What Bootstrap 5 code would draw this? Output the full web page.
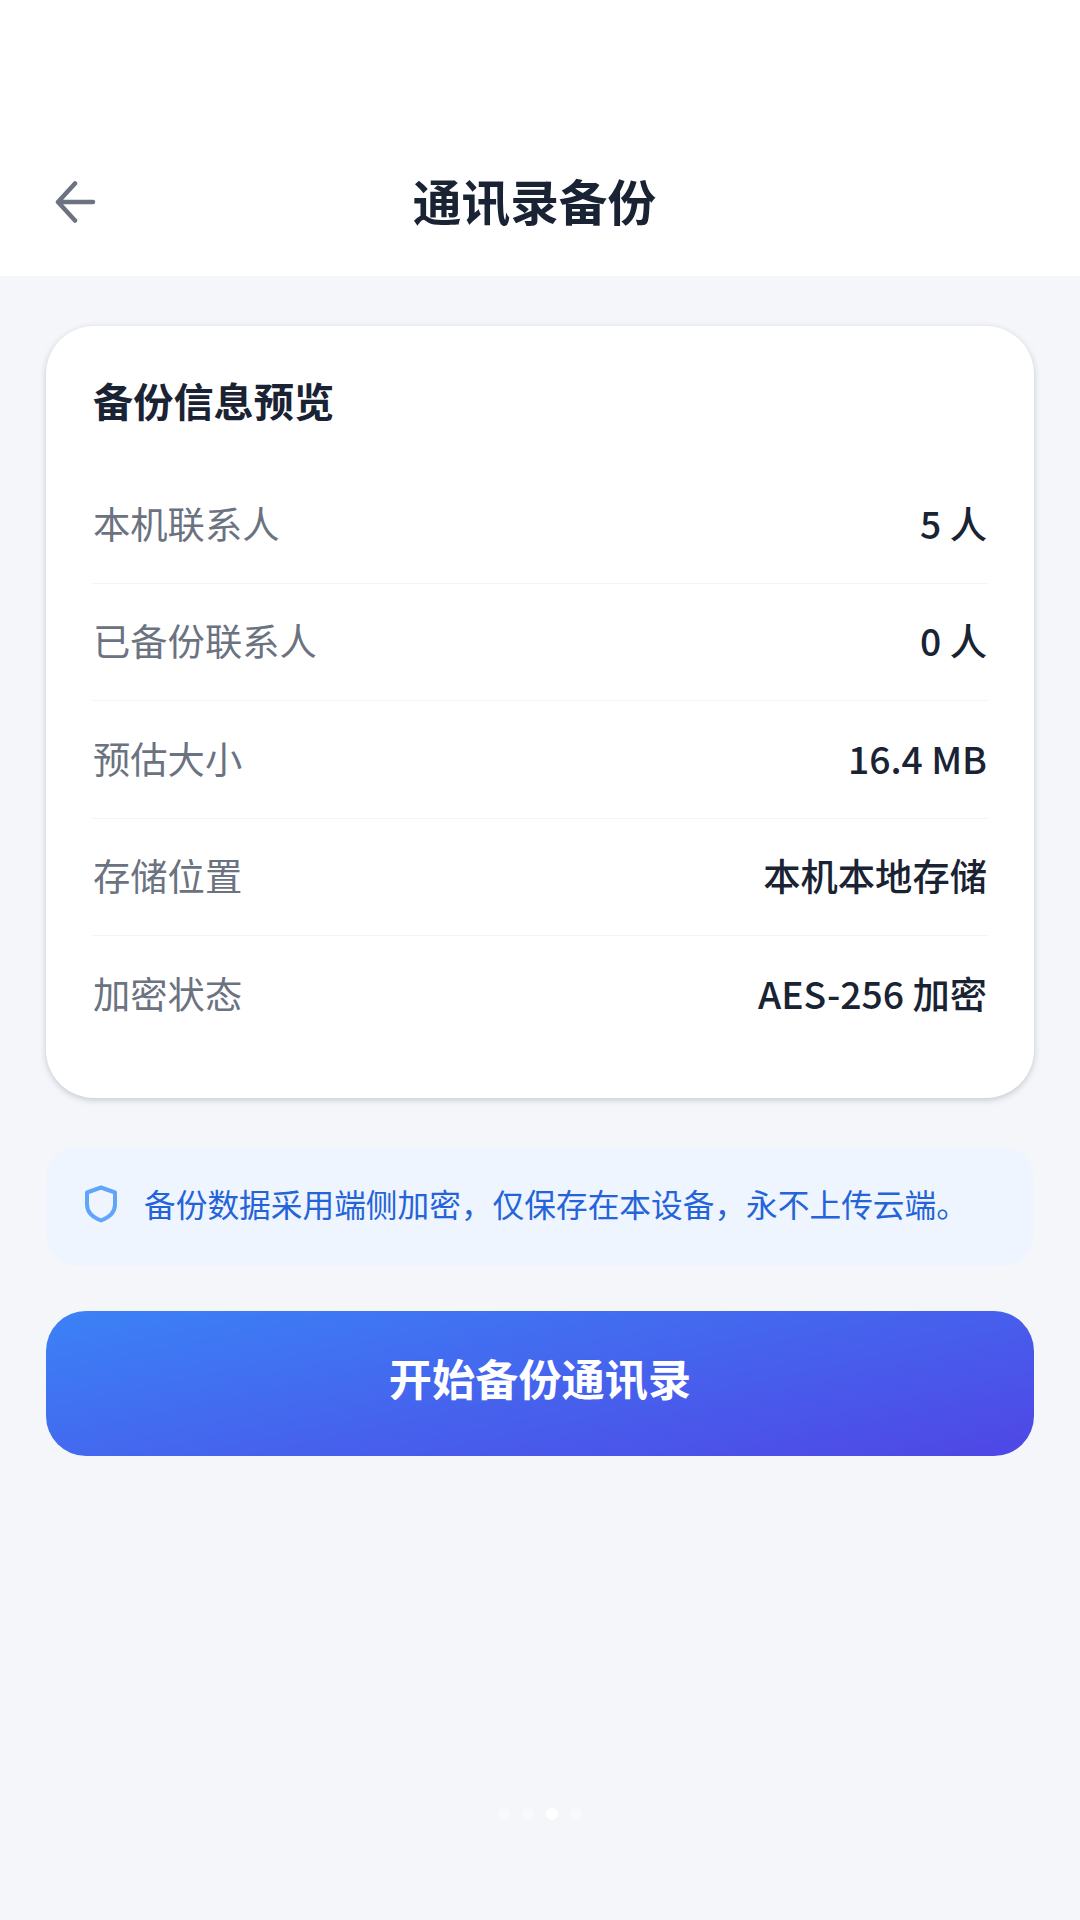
<!DOCTYPE html>
<html lang="zh-CN">
<head>
    <meta charset="UTF-8">
    <meta name="viewport" content="width=device-width, initial-scale=1.0">
    <title>通讯录备份</title>
    <link href="https://cdn.jsdelivr.net/npm/bootstrap@5.3.0/dist/css/bootstrap.min.css" rel="stylesheet">
    <style>
        body {
            background: #f4f6fa;
            font-family: "Noto Sans CJK SC", "Noto Sans", sans-serif;
            color: #1a2333;
        }

        .page-head {
            height: 276px;
            padding: 172px 46px 0 55px;
        }

        .page-head h1 {
            font-size: 48.7px;
            line-height: 56px;
            font-weight: 700;
            margin: 0;
            padding-right: 62px;
        }

        .back-btn {
            width: 42px;
            height: 60px;
        }

        .page-body {
            padding: 50px 46px 0;
        }

        .info-panel {
            background: #fff;
            border-radius: 48px;
            padding: 46px 47px 44px;
            box-shadow: 0 2px 6px rgba(30, 40, 60, .22);
        }

        .info-panel h2 {
            font-size: 40.2px;
            line-height: 56px;
            font-weight: 700;
            margin: 0 0 38px;
        }

        .info-row {
            height: 117.5px;
            padding-bottom: 1px;
            font-size: 37.3px;
            border-bottom: 1px solid #f1f3f6;
        }

        .info-row:last-child {
            border-bottom: 0;
        }

        .info-label {
            color: #6b7280;
        }

        .info-value {
            font-weight: 500;
        }

        .secure-note {
            background: #eef5fe;
            border-radius: 32px;
            height: 119px;
            margin-top: 49px;
            padding: 0 38px 4px;
            gap: 26px;
            color: #2563d9;
            font-size: 31.7px;
        }

        .start-btn {
            width: 100%;
            height: 145px;
            margin-top: 45px;
            padding: 0 0 11px;
            border: 0;
            border-radius: 40px;
            background: linear-gradient(168deg, #3b82f6, #4f46e5);
            color: #fff;
            font-size: 43.2px;
            font-weight: 700;
        }

        .pager {
            margin-top: auto;
            padding-bottom: 100px;
            gap: 12px;
        }

        .pager span {
            width: 12px;
            height: 12px;
            border-radius: 50%;
            background: #f8f9fc;
        }

        .pager span.on {
            background: #fff;
        }
    </style>
</head>
<body>
    <div class="d-flex flex-column min-vh-100">
        <header class="page-head bg-white d-flex align-items-start">
            <div class="back-btn d-flex align-items-center">
                <svg width="42" height="44" viewBox="0 0 42 44" fill="none" stroke="#6b7280" stroke-width="4.5" stroke-linecap="round" stroke-linejoin="round">
                    <path d="M38 22H3M20 3.500L3 22l17 18.500"/>
                </svg>
            </div>
            <h1 class="flex-grow-1 text-center">通讯录备份</h1>
        </header>

        <main class="page-body">
            <section class="info-panel">
                <h2>备份信息预览</h2>
                <div class="info-row d-flex justify-content-between align-items-center">
                    <span class="info-label">本机联系人</span><span class="info-value">5 人</span>
                </div>
                <div class="info-row d-flex justify-content-between align-items-center">
                    <span class="info-label">已备份联系人</span><span class="info-value">0 人</span>
                </div>
                <div class="info-row d-flex justify-content-between align-items-center">
                    <span class="info-label">预估大小</span><span class="info-value">16.4 MB</span>
                </div>
                <div class="info-row d-flex justify-content-between align-items-center">
                    <span class="info-label">存储位置</span><span class="info-value">本机本地存储</span>
                </div>
                <div class="info-row d-flex justify-content-between align-items-center">
                    <span class="info-label">加密状态</span><span class="info-value">AES-256 加密</span>
                </div>
            </section>

            <div class="secure-note d-flex align-items-center">
                <svg width="34" height="38" viewBox="0 0 34 38" fill="none" stroke="#60a5fa" stroke-width="4" stroke-linejoin="round" class="flex-shrink-0">
                    <path d="M17 2.500l14 5v12c0 8-6 13-14 16C9 32.500 3 27.500 3 19.500v-12z"/>
                </svg>
                <span>备份数据采用端侧加密，仅保存在本设备，永不上传云端。</span>
            </div>

            <button type="button" class="start-btn">开始备份通讯录</button>
        </main>

        <div class="pager d-flex justify-content-center">
            <span></span><span></span><span class="on"></span><span></span>
        </div>
    </div>
    <script src="https://cdn.jsdelivr.net/npm/bootstrap@5.3.0/dist/js/bootstrap.bundle.min.js"></script>
</body>
</html>
